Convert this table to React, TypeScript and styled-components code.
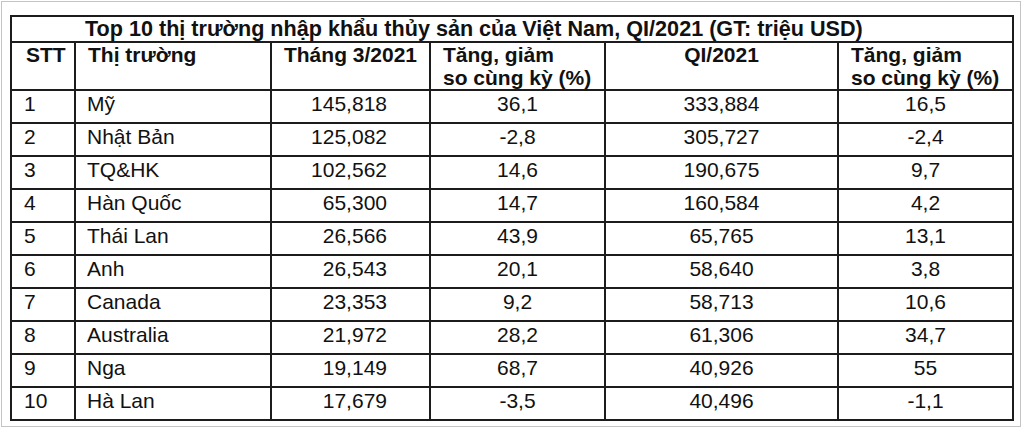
import React from "react";
import styled, { createGlobalStyle } from "styled-components";

const Global = createGlobalStyle`
  html, body { margin: 0; padding: 0; background: #ffffff; }
  body { font-family: "Liberation Sans", Arial, sans-serif; }
`;

const Frame = styled.div`
  box-sizing: border-box;
  margin: 1px 0 0 1px;
  width: 1020px;
  height: 426px;
  border: 1px solid #c4c4c4;
  padding: 13px 0 0 8px;
  background: #fff;
`;

const Table = styled.table`
  border-collapse: collapse;
  table-layout: fixed;
  width: 1002px;
  font-family: "Liberation Sans", Arial, sans-serif;
  font-size: 21px;
  line-height: 23px;
  color: #111;
`;

const TitleCell = styled.th`
  border: 2px solid #1c1c1c;
  height: 22px;
  padding: 0 0 1px 73px;
  text-align: left;
  font-weight: bold;
  font-size: 21.6px;
  white-space: nowrap;
  vertical-align: top;
`;

type Align = "left" | "center" | "right";

const HeadCell = styled.th<{ $align: Align; $pl?: number }>`
  border: 2px solid #1c1c1c;
  height: 46px;
  padding: 0 0 0 ${(p) => p.$pl ?? 0}px;
  vertical-align: top;
  text-align: ${(p) => p.$align};
  font-weight: bold;
`;

const Row = styled.tr`
  height: 33px;
`;

const Cell = styled.td<{ $align: Align; $pl?: number; $pr?: number }>`
  border: 2px solid #1c1c1c;
  padding: 0 ${(p) => p.$pr ?? 0}px 6px ${(p) => p.$pl ?? 0}px;
  vertical-align: middle;
  text-align: ${(p) => p.$align};
  white-space: nowrap;
`;

const rows: [string, string, string, string, string, string][] = [
  ["1", "Mỹ", "145,818", "36,1", "333,884", "16,5"],
  ["2", "Nhật Bản", "125,082", "-2,8", "305,727", "-2,4"],
  ["3", "TQ&HK", "102,562", "14,6", "190,675", "9,7"],
  ["4", "Hàn Quốc", "65,300", "14,7", "160,584", "4,2"],
  ["5", "Thái Lan", "26,566", "43,9", "65,765", "13,1"],
  ["6", "Anh", "26,543", "20,1", "58,640", "3,8"],
  ["7", "Canada", "23,353", "9,2", "58,713", "10,6"],
  ["8", "Australia", "21,972", "28,2", "61,306", "34,7"],
  ["9", "Nga", "19,149", "68,7", "40,926", "55"],
  ["10", "Hà Lan", "17,679", "-3,5", "40,496", "-1,1"],
];

export default function App() {
  return (
    <>
      <Global />
      <Frame>
        <Table>
          <colgroup>
            <col style={{ width: 64 }} />
            <col style={{ width: 196 }} />
            <col style={{ width: 159 }} />
            <col style={{ width: 175 }} />
            <col style={{ width: 233 }} />
            <col style={{ width: 175 }} />
          </colgroup>
          <thead>
            <tr>
              <TitleCell colSpan={6}>
                Top 10 thị trường nhập khẩu thủy sản của Việt Nam, QI/2021 (GT: triệu USD)
              </TitleCell>
            </tr>
            <tr>
              <HeadCell $align="left" $pl={14}>STT</HeadCell>
              <HeadCell $align="left" $pl={12}>Thị trường</HeadCell>
              <HeadCell $align="center">Tháng 3/2021</HeadCell>
              <HeadCell $align="left" $pl={12}>
                Tăng, giảm
                <br />
                so cùng kỳ (%)
              </HeadCell>
              <HeadCell $align="center">QI/2021</HeadCell>
              <HeadCell $align="left" $pl={12}>
                Tăng, giảm
                <br />
                so cùng kỳ (%)
              </HeadCell>
            </tr>
          </thead>
          <tbody>
            {rows.map((r) => (
              <Row key={r[0]}>
                <Cell $align="left" $pl={12}>{r[0]}</Cell>
                <Cell $align="left" $pl={11}>{r[1]}</Cell>
                <Cell $align="right" $pr={42}>{r[2]}</Cell>
                <Cell $align="center">{r[3]}</Cell>
                <Cell $align="center">{r[4]}</Cell>
                <Cell $align="center">{r[5]}</Cell>
              </Row>
            ))}
          </tbody>
        </Table>
      </Frame>
    </>
  );
}
